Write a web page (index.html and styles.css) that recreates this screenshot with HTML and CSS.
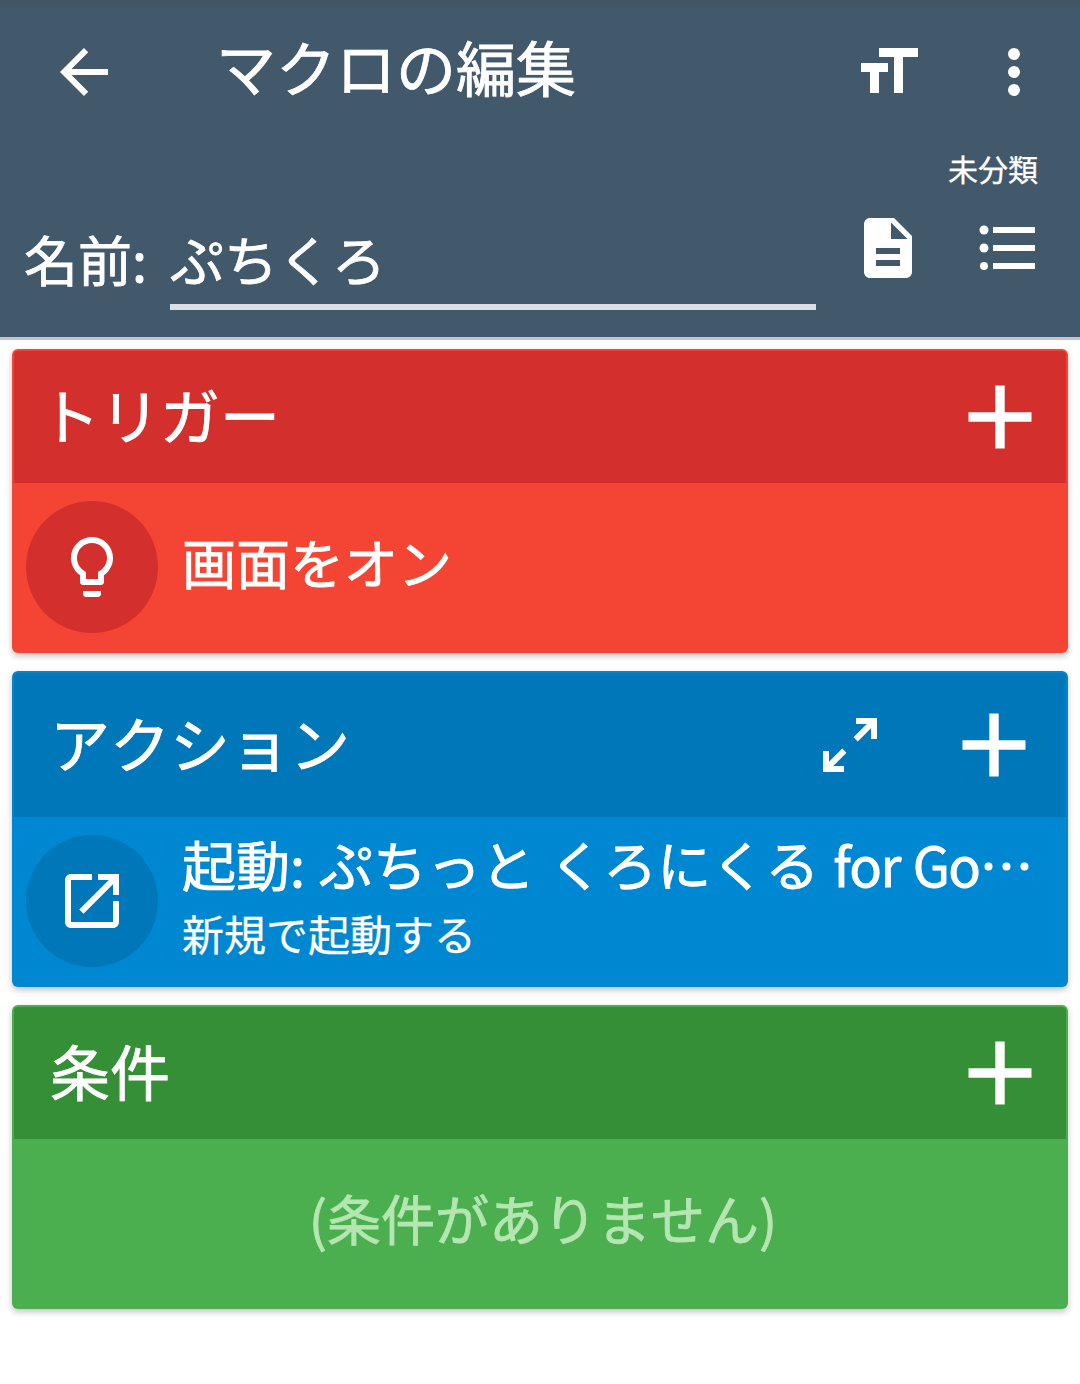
FILE: index.html
```html
<!DOCTYPE html>
<html lang="ja">
<head>
<meta charset="utf-8">
<title>マクロの編集</title>
<link rel="stylesheet" href="styles.css">
</head>
<body>
<header class="app-header">
  <div class="toolbar">
    <svg class="icon" viewBox="0 0 24 24"><path d="M20 11H7.83l5.59-5.59L12 4l-8 8 8 8 1.41-1.41L7.83 13H20v-2z"/></svg>
    <h1 class="title">マクロの編集</h1>
    <svg class="icon" viewBox="0 0 24 24"><path d="M9 4v3h5v12h3V7h5V4H9zm-6 8h3v7h3v-7h3V9H3v3z"/></svg>
    <svg class="icon more" viewBox="0 0 24 24"><circle cx="12" cy="6" r="2"/><circle cx="12" cy="12" r="2"/><circle cx="12" cy="18" r="2"/></svg>
  </div>
  <div class="category">未分類</div>
  <div class="name-row">
    <label class="name-label">名前:</label>
    <div class="name-field">ぷちくろ</div>
    <svg class="icon" viewBox="0 0 24 24"><path d="M14 2H6c-1.1 0-1.99.9-1.99 2L4 20c0 1.1.89 2 1.99 2H18c1.1 0 2-.9 2-2V8l-6-6zm2 16H8v-2h8v2zm0-4H8v-2h8v2zm-3-5V3.5L18.5 9H13z"/></svg>
    <svg class="icon list" viewBox="0 0 24 24"><circle cx="4" cy="6" r="1.5"/><circle cx="4" cy="12" r="1.5"/><circle cx="4" cy="18" r="1.33"/><path d="M7 5h14v2H7zM7 11h14v2H7zM7 17h14v2H7z"/></svg>
  </div>
</header>
<main class="cards">
  <section class="card trigger">
    <div class="card-head">
      <h2 class="card-title">トリガー</h2>
      <svg class="plus" viewBox="0 0 64 64"><path d="M27.3 .5h9.4v26.8h26.8v9.4H36.7v26.8h-9.4V36.7H.5v-9.4h26.8z"/></svg>
    </div>
    <div class="item">
      <div class="badge"><svg class="icon" viewBox="0 0 24 24"><path d="M9 21c0 .55.45 1 1 1h4c.55 0 1-.45 1-1v-1H9v1zm3-19C8.14 2 5 5.14 5 9c0 2.38 1.19 4.47 3 5.74V17c0 .55.45 1 1 1h6c.55 0 1-.45 1-1v-2.26c1.81-1.27 3-3.36 3-5.74 0-3.86-3.14-7-7-7zm2.85 11.1l-.85.6V16h-4v-2.3l-.85-.6C7.8 12.16 7 10.63 7 9c0-2.76 2.24-5 5-5s5 2.24 5 5c0 1.63-.8 3.16-2.15 4.1z"/></svg></div>
      <div class="item-text"><div class="item-title">画面をオン</div></div>
    </div>
  </section>
  <section class="card action">
    <div class="card-head">
      <h2 class="card-title">アクション</h2>
      <svg class="icon expand" viewBox="0 0 24 24"><path d="M14 3h7v7h-2V6.41l-4.42 4.42-1.41-1.41L17.59 5H14zM10 21H3v-7h2v3.59l4.42-4.42 1.41 1.41L6.41 19H10z"/></svg>
      <svg class="plus" viewBox="0 0 64 64"><path d="M27.3 .5h9.4v26.8h26.8v9.4H36.7v26.8h-9.4V36.7H.5v-9.4h26.8z"/></svg>
    </div>
    <div class="item">
      <div class="badge"><svg class="icon" viewBox="0 0 24 24"><path d="M19 19H5V5h7V3H5c-1.11 0-2 .9-2 2v14c0 1.1.89 2 2 2h14c1.1 0 2-.9 2-2v-7h-2v7zM14 3v2h3.59l-9.83 9.83 1.41 1.41L19 6.41V10h2V3h-7z"/></svg></div>
      <div class="item-text">
        <div class="item-title">起動: ぷちっと くろにくる <span class="latin">for Go</span>…</div>
        <div class="item-sub">新規で起動する</div>
      </div>
    </div>
  </section>
  <section class="card condition">
    <div class="card-head">
      <h2 class="card-title">条件</h2>
      <svg class="plus" viewBox="0 0 64 64"><path d="M27.3 .5h9.4v26.8h26.8v9.4H36.7v26.8h-9.4V36.7H.5v-9.4h26.8z"/></svg>
    </div>
    <div class="empty">(条件がありません)</div>
  </section>
</main>
</body>
</html>
```
FILE: styles.css
```css
* { box-sizing: border-box; }
body {
  margin: 0;
  min-height: 1384px;
  background: #fff;
  color: #fff;
  font-family: "Noto Sans CJK JP", sans-serif;
  font-kerning: none;
}
h1, h2 { margin: 0; font-weight: 400; }
svg { display: block; flex: none; fill: currentColor; }
.icon { width: 72px; height: 72px; }
.title, .name-label, .name-field, .card-title, .item-title, .empty {
  -webkit-text-stroke: .8px currentColor;
}
.category, .item-sub { -webkit-text-stroke: .3px currentColor; }

.app-header {
  height: 340px;
  background: linear-gradient(#405664 0, #42586b 8px);
  border-bottom: 3px solid #c3c4ca;
}
.toolbar {
  display: flex;
  align-items: center;
  height: 144px;
  padding: 0 30px 0 48px;
}
.title {
  flex: 1;
  padding: 0 0 12px 96px;
  font-size: 60px;
  line-height: 72px;
}
.more { margin-left: 54px; }
.category {
  height: 54px;
  padding-right: 42px;
  font-size: 30px;
  line-height: 49px;
  text-align: right;
}
.name-row {
  display: flex;
  padding: 14px 36px 0 24px;
}
.name-label {
  width: 146px;
  font-size: 54px;
  line-height: 94px;
  white-space: nowrap;
}
.name-field {
  width: 646px;
  height: 98px;
  border-bottom: 6px solid #d9dfe5;
  font-size: 54px;
  line-height: 94px;
}
.name-row .icon { margin-left: 36px; }
.name-row .list { margin-left: 48px; }

.cards {
  display: flex;
  flex-direction: column;
  gap: 18px;
  padding: 9px 12px;
}
.card {
  padding: 2px;
  border-radius: 6px;
  box-shadow: 0 3px 6px rgba(0, 0, 0, .24);
}
.card-head {
  display: flex;
  align-items: center;
  height: 132px;
  padding: 0 34px 0 36px;
  border-radius: 4px 4px 0 0;
}
.card-title {
  flex: 1;
  padding-bottom: 7px;
  font-size: 60px;
  line-height: 72px;
}
.plus { width: 64px; height: 64px; }
.trigger { background: #f44534; }
.trigger .card-head, .trigger .badge { background: #d32f2d; }
.trigger .card-head { padding-left: 26px; }
.action { background: #0087d1; }
.action .card-head, .action .badge { background: #0077b9; }
.action .card-head { height: 144px; padding-right: 40px; }
.expand { margin-right: 76px; }
.condition { background: #4caf4f; }
.condition .card-head { background: #358f37; }

.item {
  display: flex;
  height: 168px;
  padding: 18px 0 0 12px;
}
.badge {
  display: flex;
  flex: none;
  align-items: center;
  justify-content: center;
  width: 132px;
  height: 132px;
  border-radius: 50%;
}
.item-text { padding-left: 24px; white-space: nowrap; }
.item-title { font-size: 54px; line-height: 80px; }
.trigger .item-title { padding-top: 21px; }
.action .item-title { margin-top: -11px; word-spacing: 2px; }
.latin { letter-spacing: -1.5px; }
.item-sub { padding-top: 1px; font-size: 42px; line-height: 56px; }
.empty {
  height: 168px;
  padding-left: 6px;
  font-size: 54px;
  line-height: 158px;
  text-align: center;
  color: #b5e6b2;
}
```
